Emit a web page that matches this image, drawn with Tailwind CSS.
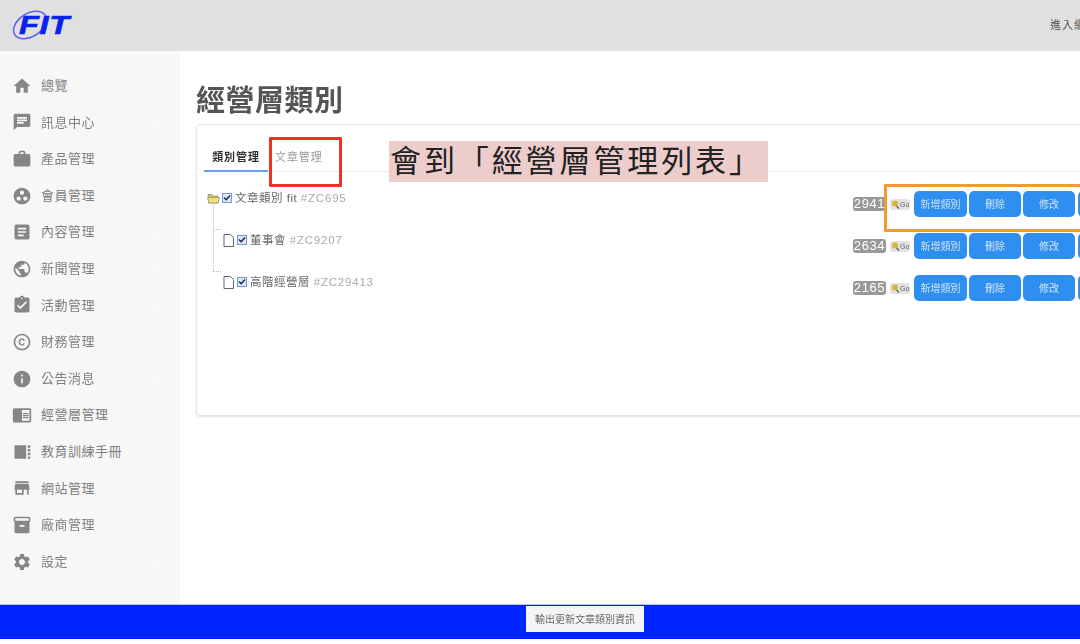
<!DOCTYPE html>
<html lang="zh-Hant">
<head>
    <meta charset="UTF-8">
    <title>經營層類別</title>
    <script src="https://cdn.jsdelivr.net/npm/@tailwindcss/browser@4"></script>
</head>
<body class="bg-white overflow-hidden">
<div class="relative w-[1080px] h-[644px] flex flex-col overflow-hidden blur-[0.5px] font-['Liberation_Sans','Noto_Sans_CJK_TC',sans-serif]">

    <!-- header -->
    <header class="h-[51px] shrink-0 bg-[#e0e0e0] flex items-center justify-between">
        <div class="relative w-[60px] h-[36px] ml-[12px] mt-[-1px]">
            <svg class="absolute left-0 top-0" width="40" height="36" viewBox="0 0 40 36">
                <ellipse cx="18" cy="18" rx="18" ry="11.5" transform="rotate(-32 18 18)" fill="none" stroke="#5a64f0" stroke-width="1.5"/>
            </svg>
            <span class="absolute left-[7px] top-[2px] origin-left scale-x-[1.3] text-[25px] leading-[32px] font-bold italic text-[#0a22f0] tracking-[0.5px] [-webkit-text-stroke:0.6px_#0a22f0]">FIT</span>
        </div>
        <span class="text-[11px] text-[#555] tracking-[1px] whitespace-nowrap w-[30px] mr-0 overflow-hidden">進入網站</span>
    </header>

    <div class="flex-1 flex min-h-0">
        <!-- sidebar -->
        <nav class="w-[180px] shrink-0 bg-[#f7f7f7] pt-[16.5px] text-[13px] text-[#808080] tracking-[0.5px]">
            <a class="h-[36.6px] flex items-center pl-[12px] gap-[9px]">
                <svg class="w-5 h-5 fill-[#868686]" viewBox="0 0 24 24"><path d="M10 20v-6h4v6h5v-8h3L12 3 2 12h3v8z"/></svg>
                <span>總覽</span>
            </a>
            <a class="h-[36.6px] flex items-center pl-[12px] gap-[9px] relative">
                <svg class="w-5 h-5 fill-[#868686]" viewBox="0 0 24 24"><path d="M20 2H4c-1.1 0-1.99.9-1.99 2L2 22l4-4h14c1.1 0 2-.9 2-2V4c0-1.1-.9-2-2-2zM6 9h12v2H6V9zm8 5H6v-2h8v2zm4-6H6V6h12v2z"/></svg>
                <span>訊息中心</span>
                <svg class="absolute left-[151px] top-[15px] w-[15px] h-[8px] stroke-white fill-none" viewBox="0 0 15 8"><path d="M0.5 0.5l7 6.5 7-6.5"/></svg>
            </a>
            <a class="h-[36.6px] flex items-center pl-[12px] gap-[9px] relative">
                <svg class="w-5 h-5 fill-[#868686]" viewBox="0 0 24 24"><path d="M20 6h-4V4c0-1.11-.89-2-2-2h-4c-1.11 0-2 .89-2 2v2H4c-1.11 0-1.99.89-1.99 2L2 19c0 1.11.89 2 2 2h16c1.11 0 2-.89 2-2V8c0-1.11-.89-2-2-2zm-6 0h-4V4h4v2z"/></svg>
                <span>產品管理</span>
                <svg class="absolute left-[151px] top-[15px] w-[15px] h-[8px] stroke-white fill-none" viewBox="0 0 15 8"><path d="M0.5 0.5l7 6.5 7-6.5"/></svg>
            </a>
            <a class="h-[36.6px] flex items-center pl-[12px] gap-[9px]">
                <svg class="w-5 h-5 fill-[#868686]" viewBox="0 0 24 24"><path d="M12 2C6.48 2 2 6.48 2 12s4.48 10 10 10 10-4.48 10-10S17.52 2 12 2zM8 17.5c-1.38 0-2.5-1.12-2.5-2.5s1.12-2.5 2.5-2.5 2.5 1.12 2.5 2.5-1.12 2.5-2.5 2.5zM9.5 8c0-1.38 1.12-2.5 2.5-2.5s2.5 1.12 2.5 2.5-1.12 2.5-2.5 2.5S9.5 9.38 9.5 8zm6.5 9.5c-1.38 0-2.5-1.12-2.5-2.5s1.12-2.5 2.5-2.5 2.5 1.12 2.5 2.5-1.12 2.5-2.5 2.5z"/></svg>
                <span>會員管理</span>
            </a>
            <a class="h-[36.6px] flex items-center pl-[12px] gap-[9px] relative">
                <svg class="w-5 h-5 fill-[#868686]" viewBox="0 0 24 24"><path d="M19 3H5c-1.1 0-2 .9-2 2v14c0 1.1.9 2 2 2h14c1.1 0 2-.9 2-2V5c0-1.1-.9-2-2-2zm-5 14H7v-2h7v2zm3-4H7v-2h10v2zm0-4H7V7h10v2z"/></svg>
                <span>內容管理</span>
                <svg class="absolute left-[151px] top-[15px] w-[15px] h-[8px] stroke-white fill-none" viewBox="0 0 15 8"><path d="M0.5 0.5l7 6.5 7-6.5"/></svg>
            </a>
            <a class="h-[36.6px] flex items-center pl-[12px] gap-[9px] relative">
                <svg class="w-5 h-5 fill-[#868686]" viewBox="0 0 24 24"><path d="M12 2C6.48 2 2 6.48 2 12s4.48 10 10 10 10-4.48 10-10S17.52 2 12 2zm-1 17.93c-3.95-.49-7-3.85-7-7.93 0-.62.08-1.21.21-1.79L9 15v1c0 1.1.9 2 2 2v1.93zm6.9-2.54c-.26-.81-1-1.39-1.9-1.39h-1v-3c0-.55-.45-1-1-1H8v-2h2c.55 0 1-.45 1-1V7h2c1.1 0 2-.9 2-2v-.41c2.93 1.19 5 4.06 5 7.41 0 2.08-.8 3.97-2.1 5.39z"/></svg>
                <span>新聞管理</span>
                <svg class="absolute left-[151px] top-[15px] w-[15px] h-[8px] stroke-white fill-none" viewBox="0 0 15 8"><path d="M0.5 0.5l7 6.5 7-6.5"/></svg>
            </a>
            <a class="h-[36.6px] flex items-center pl-[12px] gap-[9px] relative">
                <svg class="w-5 h-5 fill-[#868686]" viewBox="0 0 24 24"><path d="M19 3h-4.18C14.4 1.84 13.3 1 12 1c-1.3 0-2.4.84-2.82 2H5c-1.1 0-2 .9-2 2v14c0 1.1.9 2 2 2h14c1.1 0 2-.9 2-2V5c0-1.1-.9-2-2-2zm-7 0c.55 0 1 .45 1 1s-.45 1-1 1-1-.45-1-1 .45-1 1-1zm-2 14l-4-4 1.41-1.41L10 14.17l6.59-6.59L18 9l-8 8z"/></svg>
                <span>活動管理</span>
                <svg class="absolute left-[151px] top-[15px] w-[15px] h-[8px] stroke-white fill-none" viewBox="0 0 15 8"><path d="M0.5 0.5l7 6.5 7-6.5"/></svg>
            </a>
            <a class="h-[36.6px] flex items-center pl-[12px] gap-[9px] relative">
                <svg class="w-5 h-5 fill-[#868686]" viewBox="0 0 24 24"><path d="M10.08 10.86c.05-.33.16-.62.3-.87s.34-.46.59-.62c.24-.15.54-.22.91-.23.23.01.44.05.63.13.2.09.38.21.52.36s.25.33.34.53.13.42.14.64h1.79c-.02-.47-.11-.9-.28-1.29s-.4-.73-.7-1.01-.66-.5-1.08-.66-.88-.23-1.39-.23c-.65 0-1.22.11-1.7.34s-.88.53-1.2.92-.56.84-.71 1.36S8 11.29 8 11.87v.27c0 .58.08 1.12.23 1.64s.39.97.71 1.35.72.69 1.2.91c.48.22 1.05.34 1.7.34.47 0 .91-.08 1.32-.23s.77-.36 1.08-.63.56-.58.74-.94.29-.74.3-1.15h-1.79c-.01.21-.06.4-.15.58s-.21.33-.36.46-.32.23-.52.3c-.19.07-.39.09-.6.1-.36-.01-.66-.08-.89-.23-.25-.16-.45-.37-.59-.62s-.25-.55-.3-.88-.08-.67-.08-1v-.27c0-.35.03-.68.08-1.01zM12 2C6.48 2 2 6.48 2 12s4.48 10 10 10 10-4.48 10-10S17.52 2 12 2zm0 18c-4.41 0-8-3.59-8-8s3.59-8 8-8 8 3.59 8 8-3.59 8-8 8z"/></svg>
                <span>財務管理</span>
                <svg class="absolute left-[151px] top-[15px] w-[15px] h-[8px] stroke-white fill-none" viewBox="0 0 15 8"><path d="M0.5 0.5l7 6.5 7-6.5"/></svg>
            </a>
            <a class="h-[36.6px] flex items-center pl-[12px] gap-[9px] relative">
                <svg class="w-5 h-5 fill-[#868686]" viewBox="0 0 24 24"><path d="M12 2C6.48 2 2 6.48 2 12s4.48 10 10 10 10-4.48 10-10S17.52 2 12 2zm1 15h-2v-6h2v6zm0-8h-2V7h2v2z"/></svg>
                <span>公告消息</span>
                <svg class="absolute left-[151px] top-[15px] w-[15px] h-[8px] stroke-white fill-none" viewBox="0 0 15 8"><path d="M0.5 0.5l7 6.5 7-6.5"/></svg>
            </a>
            <a class="h-[36.6px] flex items-center pl-[12px] gap-[9px]">
                <svg class="w-5 h-5 fill-[#868686]" viewBox="0 0 24 24"><path d="M13 12h7v1.5h-7zm0-2.5h7V11h-7zm0 5h7V16h-7zM21 4H3c-1.1 0-2 .9-2 2v13c0 1.1.9 2 2 2h18c1.1 0 2-.9 2-2V6c0-1.1-.9-2-2-2zm0 15h-9V6h9v13z"/></svg>
                <span>經營層管理</span>
            </a>
            <a class="h-[36.6px] flex items-center pl-[12px] gap-[9px]">
                <svg class="w-5 h-5 fill-[#868686]" viewBox="0 0 24 24"><path d="M3 4h14v16H3zM19 4h3v3h-3zM19 8.5h3v3h-3zM19 13h3v3h-3zM19 17.5h3V20h-3z"/></svg>
                <span>教育訓練手冊</span>
            </a>
            <a class="h-[36.6px] flex items-center pl-[12px] gap-[9px]">
                <svg class="w-5 h-5 fill-[#868686]" viewBox="0 0 24 24"><path d="M20 4H4v2h16V4zm1 10v-2l-1-5H4l-1 5v2h1v6h10v-6h4v6h2v-6h1zm-9 4H6v-4h6v4z"/></svg>
                <span>網站管理</span>
            </a>
            <a class="h-[36.6px] flex items-center pl-[12px] gap-[9px]">
                <svg class="w-5 h-5 fill-[#868686]" viewBox="0 0 24 24"><path d="M20 2H4c-1 0-2 .9-2 2v3.01c0 .72.43 1.34 1 1.69V20c0 1.1 1.1 2 2 2h14c.9 0 2-.9 2-2V8.7c.57-.35 1-.97 1-1.69V4c0-1.1-1-2-2-2zm-5 12H9v-2h6v2zm5-7H4V4h16v3z"/></svg>
                <span>廠商管理</span>
            </a>
            <a class="h-[36.6px] flex items-center pl-[12px] gap-[9px] relative">
                <svg class="w-5 h-5 fill-[#868686]" viewBox="0 0 24 24"><path d="M19.14 12.94c.04-.3.06-.61.06-.94 0-.32-.02-.64-.07-.94l2.03-1.58c.18-.14.23-.41.12-.61l-1.92-3.32c-.12-.22-.37-.29-.59-.22l-2.39.96c-.5-.38-1.03-.7-1.62-.94l-.36-2.54c-.04-.24-.24-.41-.48-.41h-3.84c-.24 0-.43.17-.47.41l-.36 2.54c-.59.24-1.13.57-1.62.94l-2.39-.96c-.22-.08-.47 0-.59.22L2.74 8.87c-.12.21-.08.47.12.61l2.03 1.58c-.05.3-.09.63-.09.94s.02.64.07.94l-2.03 1.58c-.18.14-.23.41-.12.61l1.92 3.32c.12.22.37.29.59.22l2.39-.96c.5.38 1.03.7 1.62.94l.36 2.54c.05.24.24.41.48.41h3.84c.24 0 .44-.17.47-.41l.36-2.54c.59-.24 1.13-.56 1.62-.94l2.39.96c.22.08.47 0 .59-.22l1.92-3.32c.12-.22.07-.47-.12-.61l-2.01-1.58zM12 15.6c-1.98 0-3.6-1.62-3.6-3.6s1.62-3.6 3.6-3.6 3.6 1.62 3.6 3.6-1.62 3.6-3.6 3.6z"/></svg>
                <span>設定</span>
                <svg class="absolute left-[151px] top-[15px] w-[15px] h-[8px] stroke-white fill-none" viewBox="0 0 15 8"><path d="M0.5 0.5l7 6.5 7-6.5"/></svg>
            </a>
        </nav>

        <!-- main -->
        <main class="flex-1 min-w-0 pl-4">
            <h1 class="h-[73px] pt-[29px] text-[29px] leading-[42px] font-bold text-[#555] tracking-[0.5px] whitespace-nowrap">經營層類別</h1>
            <section class="w-[1000px] h-[292px] rounded border border-[#e4e4e4] shadow-[0_1px_2px_rgba(0,0,0,0.12)] pl-[7px] pt-[20px]">
                <div class="h-[27px] flex border-b border-[#ececec]">
                    <div class="w-[64px] h-[27px] border-b-2 border-[#64a5ea] text-center text-[11px] leading-[25px] font-bold text-[#333] tracking-[0.9px]">類別管理</div>
                    <div class="pl-[7px] text-[11px] leading-[25px] text-[#999] tracking-[0.9px]">文章管理</div>
                </div>
                <div class="mt-[19px] relative">
                    <div class="absolute left-[9px] top-[14px] w-[1px] h-[67px] border-l border-dotted border-[#bbb]"></div>
                    <div class="absolute left-[10px] top-[38px] w-[7px] border-t border-dotted border-[#bbb]"></div>
                    <div class="absolute left-[10px] top-[80px] w-[7px] border-t border-dotted border-[#bbb]"></div>

                    <div class="h-[42px] flex items-start">
                        <div class="w-[649px] flex items-center text-[11.5px] leading-[14px] text-[#666] tracking-[0.5px]">
                            <svg class="ml-[3px] w-[13px] h-[12px]" viewBox="0 0 13 12"><path d="M1 2.5h4l1 1.5h5v7H2z" fill="#d8c34e" stroke="#888" stroke-width=".7"/><path d="M0.5 5.5h10l2 0-1.5 5.5H2z" fill="#f0e070" stroke="#888" stroke-width=".7"/></svg>
                            <span class="ml-[2px] w-[10px] h-[10px] border border-[#6c9ae0] bg-[#dbe8fb] flex items-center justify-center"><svg class="w-2 h-2" viewBox="0 0 8 8"><path d="M1 3.5l2.2 2.2L7 1.5" fill="none" stroke="#222" stroke-width="1.4"/></svg></span>
                            <span class="ml-[3px] whitespace-nowrap">文章類別 fit <span class="text-[#aaa] tracking-[0.8px]">#ZC695</span></span>
                        </div>
                        <div class="flex items-start">
                            <span class="mt-[6px] w-[33px] h-[14px] rounded-[3px] bg-[#999] text-white text-[13px] leading-[14px] text-center tracking-[0.6px]">2941</span>
                            <span class="mt-[8px] ml-[4px] w-[20px] h-[11px] rounded-[3px] bg-[#e2e2e2] flex items-center pl-[1px]"><svg class="w-[9px] h-[9px]" viewBox="0 0 9 9"><circle cx="4" cy="3.5" r="3" fill="#d9b43c"/><path d="M5.5 6l2.5 2.5" stroke="#666" stroke-width="1.4"/></svg><span class="text-[7px] leading-[11px] text-[#666]">Go</span></span>
                            <div class="ml-[4px] flex gap-[2px] text-[10px] text-[#cfe3fb]">
                                <button class="w-[53px] h-[26px] rounded-[5px] bg-[#2f8ff0]">新增類別</button>
                                <button class="w-[52px] h-[26px] rounded-[5px] bg-[#2f8ff0]">刪除</button>
                                <button class="w-[52px] h-[26px] rounded-[5px] bg-[#2f8ff0]">修改</button>
                                <button class="ml-[1px] w-[52px] h-[26px] rounded-[5px] bg-[#2f8ff0]">排序</button>
                            </div>
                        </div>
                    </div>

                    <div class="h-[42px] flex items-start">
                        <div class="w-[649px] flex items-center text-[11.5px] leading-[14px] text-[#666] tracking-[0.5px]">
                            <svg class="ml-[19px] w-[11px] h-[13px]" viewBox="0 0 11 13"><path d="M1 .5h6.5l3 3v9H1z" fill="#fff" stroke="#666"/></svg>
                            <span class="ml-[3px] w-[10px] h-[10px] border border-[#6c9ae0] bg-[#dbe8fb] flex items-center justify-center"><svg class="w-2 h-2" viewBox="0 0 8 8"><path d="M1 3.5l2.2 2.2L7 1.5" fill="none" stroke="#222" stroke-width="1.4"/></svg></span>
                            <span class="ml-[3px] whitespace-nowrap">董事會 <span class="text-[#aaa] tracking-[0.8px]">#ZC9207</span></span>
                        </div>
                        <div class="flex items-start">
                            <span class="mt-[6px] w-[33px] h-[14px] rounded-[3px] bg-[#999] text-white text-[13px] leading-[14px] text-center tracking-[0.6px]">2634</span>
                            <span class="mt-[8px] ml-[4px] w-[20px] h-[11px] rounded-[3px] bg-[#e2e2e2] flex items-center pl-[1px]"><svg class="w-[9px] h-[9px]" viewBox="0 0 9 9"><circle cx="4" cy="3.5" r="3" fill="#d9b43c"/><path d="M5.5 6l2.5 2.5" stroke="#666" stroke-width="1.4"/></svg><span class="text-[7px] leading-[11px] text-[#666]">Go</span></span>
                            <div class="ml-[4px] flex gap-[2px] text-[10px] text-[#cfe3fb]">
                                <button class="w-[53px] h-[26px] rounded-[5px] bg-[#2f8ff0]">新增類別</button>
                                <button class="w-[52px] h-[26px] rounded-[5px] bg-[#2f8ff0]">刪除</button>
                                <button class="w-[52px] h-[26px] rounded-[5px] bg-[#2f8ff0]">修改</button>
                                <button class="ml-[1px] w-[52px] h-[26px] rounded-[5px] bg-[#2f8ff0]">排序</button>
                            </div>
                        </div>
                    </div>

                    <div class="h-[42px] flex items-start">
                        <div class="w-[649px] flex items-center text-[11.5px] leading-[14px] text-[#666] tracking-[0.5px]">
                            <svg class="ml-[19px] w-[11px] h-[13px]" viewBox="0 0 11 13"><path d="M1 .5h6.5l3 3v9H1z" fill="#fff" stroke="#666"/></svg>
                            <span class="ml-[3px] w-[10px] h-[10px] border border-[#6c9ae0] bg-[#dbe8fb] flex items-center justify-center"><svg class="w-2 h-2" viewBox="0 0 8 8"><path d="M1 3.5l2.2 2.2L7 1.5" fill="none" stroke="#222" stroke-width="1.4"/></svg></span>
                            <span class="ml-[3px] whitespace-nowrap">高階經營層 <span class="text-[#aaa] tracking-[0.8px]">#ZC29413</span></span>
                        </div>
                        <div class="flex items-start">
                            <span class="mt-[6px] w-[33px] h-[14px] rounded-[3px] bg-[#999] text-white text-[13px] leading-[14px] text-center tracking-[0.6px]">2165</span>
                            <span class="mt-[8px] ml-[4px] w-[20px] h-[11px] rounded-[3px] bg-[#e2e2e2] flex items-center pl-[1px]"><svg class="w-[9px] h-[9px]" viewBox="0 0 9 9"><circle cx="4" cy="3.5" r="3" fill="#d9b43c"/><path d="M5.5 6l2.5 2.5" stroke="#666" stroke-width="1.4"/></svg><span class="text-[7px] leading-[11px] text-[#666]">Go</span></span>
                            <div class="ml-[4px] flex gap-[2px] text-[10px] text-[#cfe3fb]">
                                <button class="w-[53px] h-[26px] rounded-[5px] bg-[#2f8ff0]">新增類別</button>
                                <button class="w-[52px] h-[26px] rounded-[5px] bg-[#2f8ff0]">刪除</button>
                                <button class="w-[52px] h-[26px] rounded-[5px] bg-[#2f8ff0]">修改</button>
                                <button class="ml-[1px] w-[52px] h-[26px] rounded-[5px] bg-[#2f8ff0]">排序</button>
                            </div>
                        </div>
                    </div>
                </div>
            </section>
        </main>
    </div>

    <!-- bottom bar -->
    <footer class="h-[35px] shrink-0 bg-[#0024ff] pt-[1px] pl-[526px] border-t border-[#b9b9f5]">
        <button class="block w-[118px] h-[26px] bg-[#f5f5f5] text-[10px] text-[#666]">輸出更新文章類別資訊</button>
    </footer>
    <div class="h-[5px] shrink-0 bg-white"></div>

    <!-- annotations drawn on top of the screenshot -->
    <div class="absolute left-[269px] top-[137px] w-[73px] h-[50px] rounded-[1px] border-[3px] border-[#ee3124]"></div>
    <div class="absolute left-[884px] top-[184px] w-[220px] h-[48px] rounded-[1px] border-[3px] border-[#f59a30]"></div>
    <div class="absolute left-[389px] top-[141px] w-[379px] h-[41px] bg-[#edcccc] text-[31px] leading-[41px] text-[#222] pl-[1px] whitespace-nowrap tracking-[2.9px]">會到「經營層管理列表」</div>
</div>
</body>
</html>
